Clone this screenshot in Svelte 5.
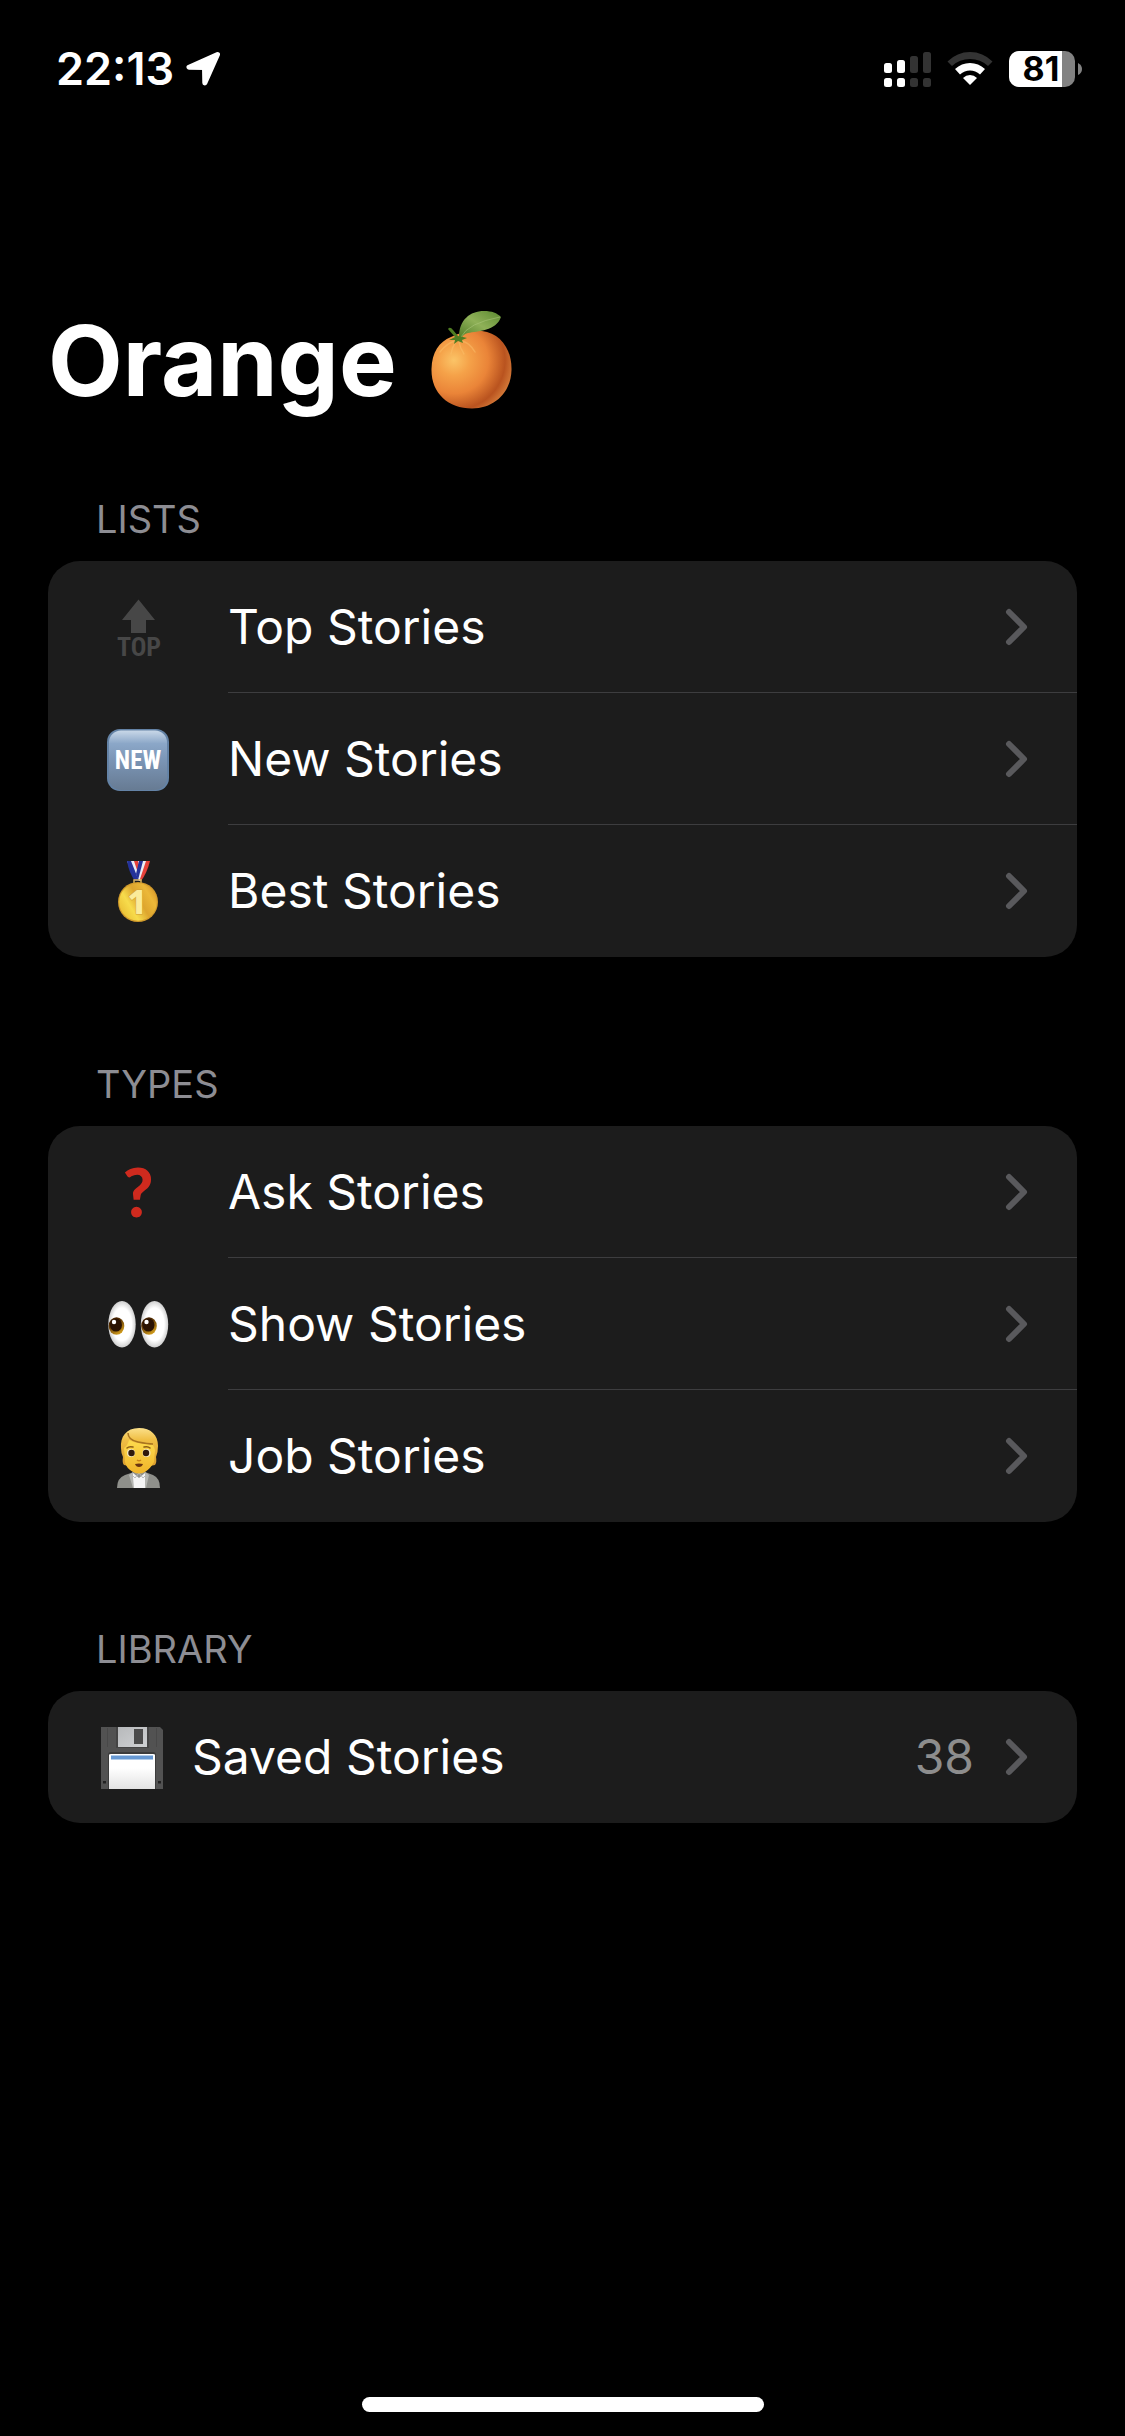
<script>
  const sections = [
    {
      title: 'Lists',
      wide: true,
      rows: [
        { icon: 'top', label: 'Top Stories' },
        { icon: 'new', label: 'New Stories' },
        { icon: 'medal', label: 'Best Stories' }
      ]
    },
    {
      title: 'Types',
      wide: true,
      rows: [
        { icon: 'question', label: 'Ask Stories' },
        { icon: 'eyes', label: 'Show Stories' },
        { icon: 'person', label: 'Job Stories' }
      ]
    },
    {
      title: 'Library',
      wide: false,
      rows: [{ icon: 'disk', label: 'Saved Stories', count: 38 }]
    }
  ];
</script>

<div class="screen">
  <header class="status">
    <div class="status-side">
      <time class="clock">22:13</time>
      <svg class="arrow" width="36" height="36" viewBox="0 0 36 36" aria-hidden="true">
        <path d="M31.5 3.5 3 16.3 18.5 16.6 18.8 32Z" fill="#fff" stroke="#fff" stroke-width="5" stroke-linejoin="round" />
      </svg>
    </div>
    <div class="status-side indicators">
      <svg width="47" height="36" viewBox="0 0 47 36" aria-hidden="true">
        <g fill="#fff">
          <rect x="0" y="12" width="8" height="10" rx="2.5" />
          <rect x="13" y="9" width="8" height="13" rx="2.5" />
          <rect x="0" y="27" width="8" height="9" rx="2.5" />
          <rect x="13" y="27" width="8" height="9" rx="2.5" />
        </g>
        <g fill="#333">
          <rect x="26" y="5" width="8" height="17" rx="2.5" />
          <rect x="39" y="1" width="8" height="21" rx="2.5" />
          <rect x="26" y="27" width="8" height="9" rx="2.5" />
          <rect x="39" y="27" width="8" height="9" rx="2.5" />
        </g>
      </svg>
      <svg width="46" height="36" viewBox="0 0 46 36" aria-hidden="true">
        <path d="M0.500 10.500Q10 1 23 1T45.500 10.500L41 15Q33.500 8 23 8T5 15Z" fill="#333" />
        <path d="M8 18Q14.500 12 23 12T38 18L33 23.500Q28.500 19.500 23 19.500T13 23.500Z" fill="#fff" />
        <path d="M16 27Q19 24 23 24T30 27L23 34Z" fill="#fff" />
      </svg>
      <svg width="73" height="36" viewBox="0 0 73 36" role="img" aria-label="Battery 81 percent">
        <rect width="66" height="36" rx="10" fill="#828282" />
        <path d="M10 0H53V36H10A10 10 0 0 1 0 26V10A10 10 0 0 1 10 0Z" fill="#fff" />
        <path d="M69 12Q73 14 73 18T69 24Z" fill="#828282" />
        <text x="32" y="30" text-anchor="middle" class="charge">81</text>
      </svg>
    </div>
  </header>

  <main>
    <h1>
      <span>Orange</span>
      <svg width="82" height="100" viewBox="433 311 82 100" role="img" aria-label="orange">
        <defs>
          <radialGradient id="peel" cx="0.28" cy="0.38" r="0.78">
            <stop offset="0" stop-color="#fbc467" />
            <stop offset="0.25" stop-color="#f5a249" />
            <stop offset="0.55" stop-color="#ea8438" />
            <stop offset="0.82" stop-color="#b9531f" />
            <stop offset="1" stop-color="#d9813d" />
          </radialGradient>
          <linearGradient id="leaf" x1="0" y1="1" x2="1" y2="0">
            <stop offset="0" stop-color="#4d7a25" />
            <stop offset="0.5" stop-color="#8fb158" />
            <stop offset="1" stop-color="#5c8a30" />
          </linearGradient>
        </defs>
        <path d="M484 331C502 333 514 349 513.500 370C513 393 496 408.500 474 408.500C450 408.500 433 393 433.500 369C434 352 441 342 453 337C463 332 474 330 484 331Z" fill="url(#peel)" />
        <path d="M457 341Q449 343 442 352M464 341Q472 343 477 352M461 342Q462 348 466 354M457 343Q454 348 453 354" fill="none" stroke="#fbc06a" stroke-width="1.500" stroke-linecap="round" opacity="0.500" />
        <path d="M461 337C461 320 472 311 486 311C494 311 499 313 503 317C498 331 480 331 470 333Q465 334 463 339Z" fill="url(#leaf)" />
        <path d="M463 337Q470 323 502 317" fill="none" stroke="#a9c578" stroke-width="1" opacity="0.600" />
        <path d="M450 329Q452 326 455 330L460 336L465 337L469 338L464 340L465 343L460 341L456 344L457 340L451 340L457 337Z" fill="#4f7d22" />
      </svg>
    </h1>

    {#each sections as section}
      <section>
        <h2>{section.title}</h2>
        <ul>
          {#each section.rows as row}
            <li>
              <a href="#{row.icon}">
                <span class="icon" class:wide={section.wide}>
                  <svg width="64" height="64" viewBox="-1 -2 64 64" aria-hidden="true">
                    {#if row.icon === 'top'}
                      <path d="M31.500 2.500 48 23H39V36H24V23H15Z" fill="#474747" />
                      <text x="32" y="59" text-anchor="middle" class="top-word">TOP</text>
                    {:else if row.icon === 'new'}
                      <defs>
                        <linearGradient id="tile" x1="0" y1="0" x2="0" y2="1">
                          <stop offset="0" stop-color="#c9d8e8" />
                          <stop offset="0.22" stop-color="#8ba7c8" />
                          <stop offset="0.5" stop-color="#7b95b5" />
                          <stop offset="1" stop-color="#677b93" />
                        </linearGradient>
                      </defs>
                      <rect width="62" height="62" rx="13" fill="#6483a6" />
                      <rect x="2" y="1.500" width="58" height="59.500" rx="12" fill="url(#tile)" />
                      <text x="31" y="40" text-anchor="middle" class="new-word">NEW</text>
                    {:else if row.icon === 'medal'}
                      <defs>
                        <linearGradient id="gold" x1="0" y1="0.800" x2="1" y2="0.200">
                          <stop offset="0" stop-color="#e9bb31" />
                          <stop offset="0.3" stop-color="#f7dc4c" />
                          <stop offset="0.55" stop-color="#dda52e" />
                          <stop offset="0.8" stop-color="#ecb838" />
                          <stop offset="1" stop-color="#d8962b" />
                        </linearGradient>
                      </defs>
                      <path d="M20 0H42L34 20H28Z" fill="#e9edf5" />
                      <path d="M20 0H24L32 20H28Q22 12 20 0Z" fill="#24329a" />
                      <path d="M27 0H31L33 8L31 12Z" fill="#e5413a" />
                      <path d="M32 0H36L31 19L29 13Z" fill="#24329a" />
                      <path d="M39 0H43Q40 12 34 20L33 18Z" fill="#e5413a" />
                      <path d="M27 22V19H34V22" fill="none" stroke="#d6b15a" stroke-width="1.500" />
                      <circle cx="31" cy="41" r="20" fill="#d19a2b" />
                      <circle cx="31" cy="41" r="18.800" fill="url(#gold)" />
                      <text x="30" y="53" text-anchor="middle" class="medal-word">1</text>
                    {:else if row.icon === 'question'}
                      <text x="31" y="55" text-anchor="middle" class="question-word">?</text>
                    {:else if row.icon === 'eyes'}
                      <defs>
                        <radialGradient id="ball">
                          <stop offset="0.700" stop-color="#fff" />
                          <stop offset="1" stop-color="#cfcfcf" />
                        </radialGradient>
                        <linearGradient id="iris" x1="0" y1="0" x2="0.600" y2="1">
                          <stop offset="0.3" stop-color="#4a2500" />
                          <stop offset="1" stop-color="#cf9a1c" />
                        </linearGradient>
                      </defs>
                      {#each [0, 32.500] as shift}
                        <g transform="translate({shift} 0)">
                          <ellipse cx="15" cy="30.300" rx="13.700" ry="23.300" fill="url(#ball)" />
                          <ellipse cx="9.500" cy="32" rx="7.800" ry="8.800" fill="url(#iris)" />
                          <ellipse cx="9" cy="31" rx="6" ry="6.600" fill="#2b1302" />
                          <circle cx="7" cy="28" r="2.200" fill="#fff" />
                        </g>
                      {/each}
                    {:else if row.icon === 'person'}
                      <defs>
                        <linearGradient id="hair" x1="0" y1="0" x2="0" y2="1">
                          <stop offset="0" stop-color="#fbe08a" />
                          <stop offset="0.3" stop-color="#f0bf45" />
                          <stop offset="1" stop-color="#d79b2c" />
                        </linearGradient>
                        <linearGradient id="skin" x1="0" y1="0" x2="0" y2="1">
                          <stop offset="0" stop-color="#fddb4e" />
                          <stop offset="1" stop-color="#f0b429" />
                        </linearGradient>
                      </defs>
                      <path d="M10 62Q10 52 18 49L27 46H38L46 49Q53 52 53 62Z" fill="#8f908b" />
                      <path d="M26 47 32 52 38 47 39 62H26Z" fill="#f5f5f5" />
                      <path d="M26 46 22 49 26 62H27L26 51ZM38 46 42 49 39 62H38L38 51Z" fill="#b5b6b2" />
                      <path d="M26 50 28 52 32 47 36 52 38 50" fill="none" stroke="#b9b9b9" />
                      <path d="M32 2C19 2 13 11 14 22Q14 27 16 31Q15 37 17 39Q24 41 32 41T48 39Q50 36 49 31Q51 26 51 20C51 9 44 2 32 2Z" fill="url(#hair)" />
                      <path d="M17 22Q21 19 22 14Q31 19 43 17Q47 19 48 24L47 36Q44 42 38 46Q32 49 26 46Q19 42 18 36Z" fill="url(#skin)" />
                      <path d="M21 7Q21 14 31 16T46 18" fill="none" stroke="#a9741f" stroke-width="1.500" />
                      <path d="M20 22Q22 20 26 21M37 21Q41 20 43 22" fill="none" stroke="#8d5d14" stroke-width="1.500" stroke-linecap="round" />
                      <circle cx="24" cy="27" r="4" fill="#f4e9c3" />
                      <circle cx="39.500" cy="27" r="4" fill="#f4e9c3" />
                      <circle cx="24.500" cy="27" r="3.200" fill="#301a0b" />
                      <circle cx="39" cy="27" r="3.200" fill="#301a0b" />
                      <path d="M30 34Q32 35.500 34 34" fill="none" stroke="#c98418" stroke-width="1.500" />
                      <path d="M28 38Q32 37 36 38Q35 41 32 41T28 38Z" fill="#6b3510" />
                    {:else}
                      <defs>
                        <linearGradient id="paper" x1="0" y1="0" x2="0" y2="1">
                          <stop offset="0.4" stop-color="#fff" />
                          <stop offset="1" stop-color="#e2e2e2" />
                        </linearGradient>
                        <linearGradient id="shutter" x1="0" y1="0" x2="1" y2="1">
                          <stop offset="0" stop-color="#b7b9bb" />
                          <stop offset="1" stop-color="#cfd1d3" />
                        </linearGradient>
                      </defs>
                      <path d="M0 0H59L62 3V62H0Z" fill="#525252" />
                      <path d="M6.500 1V20M55.500 1V20" stroke="#484848" />
                      <path d="M15 0H48V21H15Z" fill="#444" />
                      <rect x="17" y="0" width="29" height="20" fill="url(#shutter)" />
                      <rect x="33" y="2" width="9" height="15" fill="#4b4b4b" />
                      <path d="M7 62V28Q7 25 10 25H52Q55 25 55 28V62Z" fill="#3c3c3c" />
                      <path d="M8 62V28Q8 27 10 27H52Q54 27 54 28V62Z" fill="url(#paper)" />
                      <rect x="10" y="28.500" width="42" height="4" fill="#6799d3" />
                      <rect x="2" y="54" width="3" height="2.500" fill="#222" />
                      <rect x="57" y="54" width="3" height="2.500" fill="#222" />
                    {/if}
                  </svg>
                </span>
                <span class="body">
                  <span class="label">{row.label}</span>
                  {#if row.count}<span class="count">{row.count}</span>{/if}
                  <svg width="24" height="36" viewBox="0 0 24 36" aria-hidden="true">
                    <path d="M4 3 19 18 4 33" fill="none" stroke="#59595c" stroke-width="6" stroke-linecap="round" stroke-linejoin="round" />
                  </svg>
                </span>
              </a>
            </li>
          {/each}
        </ul>
      </section>
    {/each}
  </main>

  <footer><div class="home"></div></footer>
</div>

<style>
  :global(body) {
    background: #000;
  }
  .screen {
    box-sizing: border-box;
    min-height: 100vh;
    display: flex;
    flex-direction: column;
    background: #000;
    color: #fff;
    font-family: Inter, 'Liberation Sans', sans-serif;
  }
  svg {
    display: block;
    flex: none;
    overflow: visible;
  }
  .status {
    display: flex;
    justify-content: space-between;
    align-items: center;
    padding: 39px 43px 0 56px;
  }
  .status-side {
    display: flex;
    align-items: center;
    gap: 12px;
  }
  .indicators {
    gap: 16px;
  }
  .clock {
    font-size: 45px;
    line-height: 60px;
    font-weight: 600;
  }
  .charge {
    font-size: 34px;
    font-weight: 700;
    fill: #000;
  }
  main {
    flex: 1;
    padding: 202px 48px 0;
  }
  h1 {
    display: flex;
    align-items: center;
    gap: 34px;
    margin: 0 0 74px;
    font-size: 97px;
    line-height: 120px;
    font-weight: 700;
  }
  section {
    margin-bottom: 103px;
  }
  h2 {
    margin: 0 0 18px;
    padding: 0 48px;
    font-size: 38px;
    line-height: 48px;
    font-weight: 400;
    text-transform: uppercase;
    color: #8d8d93;
  }
  ul {
    margin: 0;
    padding: 0;
    list-style: none;
    background: #1c1c1c;
    border-radius: 32px;
  }
  a {
    display: flex;
    padding-left: 48px;
    color: inherit;
    text-decoration: none;
  }
  .icon {
    display: flex;
    align-items: center;
    justify-content: center;
    width: 72px;
    margin-right: 24px;
  }
  .icon.wide {
    width: 84px;
    margin-right: 48px;
  }
  .body {
    flex: 1;
    display: flex;
    align-items: center;
    gap: 31px;
    padding: 36px 48px 35px 0;
    border-bottom: 1px solid #3d3d3f;
    font-size: 48px;
    line-height: 60px;
  }
  li:last-child .body {
    border-color: transparent;
  }
  .label {
    flex: 1;
  }
  .count {
    color: #8d8d8d;
  }
  .top-word,
  .new-word {
    font-family: 'Roboto Condensed', Roboto, sans-serif;
    font-weight: 700;
  }
  .top-word {
    font-size: 26px;
    fill: #474747;
  }
  .new-word {
    font-size: 25px;
    fill: #fff;
  }
  .medal-word {
    font-family: 'Noto Sans', sans-serif;
    font-size: 34px;
    font-weight: 800;
    fill: #fbeb9a;
    stroke: #d3a035;
    stroke-width: 1px;
    paint-order: stroke;
  }
  .question-word {
    font-family: Lato, sans-serif;
    font-size: 66px;
    font-weight: 900;
    fill: #cf2a1e;
  }
  footer {
    display: flex;
    justify-content: center;
    padding-bottom: 24px;
  }
  .home {
    width: 402px;
    height: 15px;
    border-radius: 8px;
    background: #fff;
  }
</style>
